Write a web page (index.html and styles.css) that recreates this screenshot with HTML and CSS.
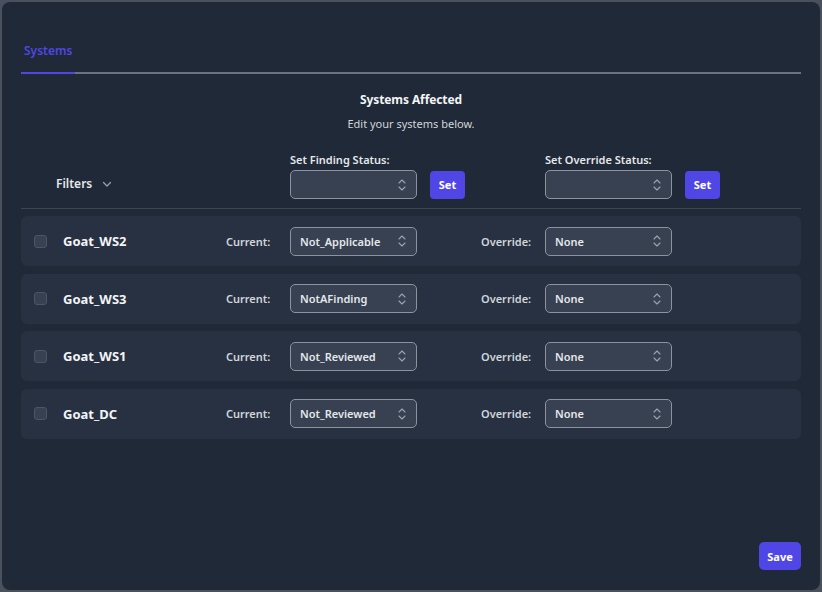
FILE: index.html
```html
<!DOCTYPE html>
<html>
<head>
<meta charset="utf-8">
<link rel="stylesheet" href="styles.css">
</head>
<body>
<div class="modal">
  <div class="tabs">
    <div class="tab">Systems</div>
  </div>
  <div class="heading">
    <div class="title">Systems Affected</div>
    <div class="subtitle">Edit your systems below.</div>
  </div>
  <div class="controls">
    <div class="filters">Filters
      <svg class="chev" width="10" height="10" viewBox="0 0 10 10"><path d="M1.5 3.5 L5 7 L8.5 3.5" fill="none" stroke="#9ca3af" stroke-width="1.2" stroke-linecap="round" stroke-linejoin="round"/></svg>
    </div>
    <div class="group">
      <div class="glabel">Set Finding Status:</div>
      <div class="gline">
        <div class="select"><span></span><svg class="ud" width="8" height="14" viewBox="0 0 8 14"><path d="M1 5 L4 2 L7 5 M1 9 L4 12 L7 9" fill="none" stroke="#9ca3af" stroke-width="1.1" stroke-linecap="round" stroke-linejoin="round"/></svg></div>
        <button class="btn">Set</button>
      </div>
    </div>
    <div class="group">
      <div class="glabel">Set Override Status:</div>
      <div class="gline">
        <div class="select"><span></span><svg class="ud" width="8" height="14" viewBox="0 0 8 14"><path d="M1 5 L4 2 L7 5 M1 9 L4 12 L7 9" fill="none" stroke="#9ca3af" stroke-width="1.1" stroke-linecap="round" stroke-linejoin="round"/></svg></div>
        <button class="btn">Set</button>
      </div>
    </div>
  </div>
  <div class="rows">
    <div class="row">
      <div class="check"></div>
      <div class="name">Goat_WS2</div>
      <div class="lbl">Current:</div>
      <div class="select"><span>Not_Applicable</span><svg class="ud" width="8" height="14" viewBox="0 0 8 14"><path d="M1 5 L4 2 L7 5 M1 9 L4 12 L7 9" fill="none" stroke="#9ca3af" stroke-width="1.1" stroke-linecap="round" stroke-linejoin="round"/></svg></div>
      <div class="lbl lbl2">Override:</div>
      <div class="select"><span>None</span><svg class="ud" width="8" height="14" viewBox="0 0 8 14"><path d="M1 5 L4 2 L7 5 M1 9 L4 12 L7 9" fill="none" stroke="#9ca3af" stroke-width="1.1" stroke-linecap="round" stroke-linejoin="round"/></svg></div>
    </div>
    <div class="row">
      <div class="check"></div>
      <div class="name">Goat_WS3</div>
      <div class="lbl">Current:</div>
      <div class="select"><span>NotAFinding</span><svg class="ud" width="8" height="14" viewBox="0 0 8 14"><path d="M1 5 L4 2 L7 5 M1 9 L4 12 L7 9" fill="none" stroke="#9ca3af" stroke-width="1.1" stroke-linecap="round" stroke-linejoin="round"/></svg></div>
      <div class="lbl lbl2">Override:</div>
      <div class="select"><span>None</span><svg class="ud" width="8" height="14" viewBox="0 0 8 14"><path d="M1 5 L4 2 L7 5 M1 9 L4 12 L7 9" fill="none" stroke="#9ca3af" stroke-width="1.1" stroke-linecap="round" stroke-linejoin="round"/></svg></div>
    </div>
    <div class="row">
      <div class="check"></div>
      <div class="name">Goat_WS1</div>
      <div class="lbl">Current:</div>
      <div class="select"><span>Not_Reviewed</span><svg class="ud" width="8" height="14" viewBox="0 0 8 14"><path d="M1 5 L4 2 L7 5 M1 9 L4 12 L7 9" fill="none" stroke="#9ca3af" stroke-width="1.1" stroke-linecap="round" stroke-linejoin="round"/></svg></div>
      <div class="lbl lbl2">Override:</div>
      <div class="select"><span>None</span><svg class="ud" width="8" height="14" viewBox="0 0 8 14"><path d="M1 5 L4 2 L7 5 M1 9 L4 12 L7 9" fill="none" stroke="#9ca3af" stroke-width="1.1" stroke-linecap="round" stroke-linejoin="round"/></svg></div>
    </div>
    <div class="row">
      <div class="check"></div>
      <div class="name">Goat_DC</div>
      <div class="lbl">Current:</div>
      <div class="select"><span>Not_Reviewed</span><svg class="ud" width="8" height="14" viewBox="0 0 8 14"><path d="M1 5 L4 2 L7 5 M1 9 L4 12 L7 9" fill="none" stroke="#9ca3af" stroke-width="1.1" stroke-linecap="round" stroke-linejoin="round"/></svg></div>
      <div class="lbl lbl2">Override:</div>
      <div class="select"><span>None</span><svg class="ud" width="8" height="14" viewBox="0 0 8 14"><path d="M1 5 L4 2 L7 5 M1 9 L4 12 L7 9" fill="none" stroke="#9ca3af" stroke-width="1.1" stroke-linecap="round" stroke-linejoin="round"/></svg></div>
    </div>
  </div>
  <div class="footer">
    <button class="btn save">Save</button>
  </div>
</div>
</body>
</html>
```
FILE: styles.css
```css
* { box-sizing: border-box; }
html, body { margin: 0; padding: 0; }
body {
  background: #4a505c;
  width: 822px;
  height: 592px;
  overflow: hidden;
  font-family: "Noto Sans", "Open Sans", sans-serif;
  padding: 2px;
}
.modal {
  width: 818px;
  height: 588px;
  background: #1f2937;
  border-radius: 8px;
  padding: 0 19px 20px 19px;
  display: flex;
  flex-direction: column;
}
.tabs {
  padding-top: 41px;
  border-bottom: 2px solid #6b7280;
  display: flex;
}
.tab {
  color: #4f46e5;
  font-size: 12px;
  font-weight: 600;
  line-height: 16px;
  padding: 0 4px 13px 3px;
  border-bottom: 2px solid #4f46e5;
  margin-bottom: -2px;
  width: 54px;
}
.heading {
  text-align: center;
  padding-top: 18px;
}
.title {
  color: #f3f4f6;
  font-size: 12px;
  font-weight: 700;
  line-height: 16px;
  letter-spacing: -0.1px;
}
.subtitle {
  color: #d1d5db;
  font-size: 11px;
  line-height: 16px;
  margin-top: 8px;
}
.controls {
  display: flex;
  align-items: flex-end;
  margin-top: 21px;
  padding-bottom: 9px;
  border-bottom: 1px solid #3b4452;
}
.filters {
  width: 269px;
  padding-left: 35px;
  color: #e5e7eb;
  font-size: 12px;
  font-weight: 600;
  line-height: 16px;
  padding-bottom: 7px;
  display: flex;
  align-items: center;
}
.chev { margin-left: 10px; }
.group { width: 255px; }
.glabel {
  color: #e5e7eb;
  font-size: 11px;
  font-weight: 600;
  line-height: 14px;
  margin-bottom: 3px;
}
.gline { display: flex; align-items: center; gap: 13px; }
.select {
  width: 127px;
  height: 29px;
  background: #374151;
  border: 1px solid #8c939e;
  border-radius: 5px;
  display: flex;
  align-items: center;
  justify-content: space-between;
  padding: 0 10px 0 9px;
  color: #e5e7eb;
  font-size: 11px;
  font-weight: 600;
}
.btn {
  background: #4f46e5;
  color: #ffffff;
  border: none;
  border-radius: 4px;
  height: 28px;
  width: 35px;
  font-family: inherit;
  font-size: 11px;
  font-weight: 700;
  padding: 0;
}
.rows {
  display: flex;
  flex-direction: column;
  gap: 7.6px;
  margin-top: 7px;
}
.row {
  height: 50px;
  background: #273141;
  border-radius: 6px;
  display: flex;
  align-items: center;
  padding-left: 13px;
}
.check {
  width: 13px;
  height: 13px;
  background: #374151;
  border: 1px solid #4b5563;
  border-radius: 3px;
}
.name {
  margin-left: 16px;
  width: 163px;
  color: #f3f4f6;
  font-size: 13px;
  font-weight: 700;
}
.lbl {
  width: 64px;
  color: #d1d5db;
  font-size: 11px;
  font-weight: 600;
}
.lbl2 { margin-left: 64px; }
.footer {
  margin-top: auto;
  display: flex;
  justify-content: flex-end;
}
.save {
  width: 42px;
  height: 28px;
  border-radius: 5px;
}
```
